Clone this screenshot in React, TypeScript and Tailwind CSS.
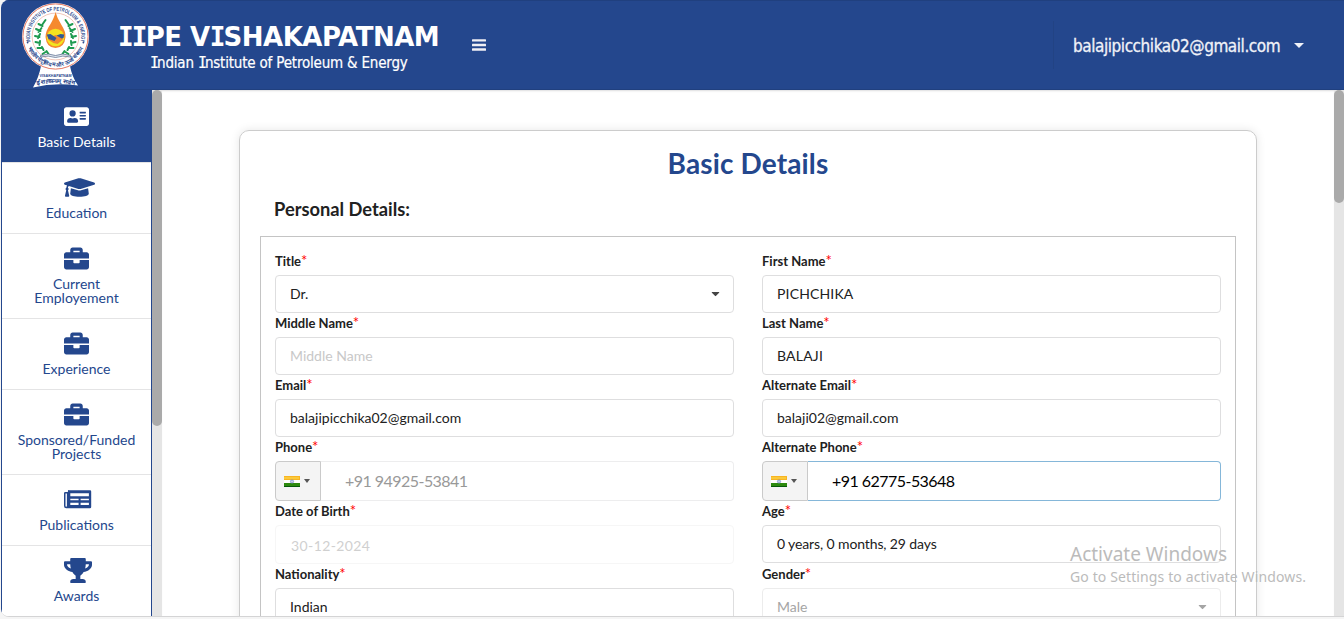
import type { ReactNode } from "react";
import { FaBriefcase, FaGraduationCap, FaTrophy, FaCaretDown } from "react-icons/fa";

function Logo() {
  return (
    <svg width="72" height="88" viewBox="0 0 72 88" className="block">
      <defs>
        <path id="arcTop" d="M11.700 41.700 A25.600 25.600 0 1 1 61.300 41.700" />
        <path id="arcBottom" d="M8 44.800 A30 30 0 0 0 65 44.800" />
        <path id="arcBase" d="M16.500 84.500 Q36.500 79.500 56.500 84.500" />
      </defs>
      <path d="M22 65 H51 Q53 76 59 84.500 Q36 81 14 86.500 Q20 76 22 65Z" fill="#fff" />
      <circle cx="36.500" cy="35.500" r="33.500" fill="#fff" />
      <circle cx="36.500" cy="35.500" r="32.600" fill="none" stroke="#e2694f" strokeWidth="0.900" />
      <circle cx="36.500" cy="35.500" r="23.400" fill="none" stroke="#e8a08c" strokeWidth="0.600" />
      <text fontFamily="Liberation Sans" fontWeight="bold" fontSize="5.600" fill="#2b4a8e">
        <textPath href="#arcTop" textLength="91" lengthAdjust="spacingAndGlyphs" startOffset="1">INDIAN INSTITUTE OF PETROLEUM &amp; ENERGY</textPath>
      </text>
      <text fontFamily="sans-serif" fontWeight="bold" fontSize="5.400" fill="#2b4a8e">
        <textPath href="#arcBottom" textLength="70" lengthAdjust="spacingAndGlyphs" startOffset="2">भारतीय पेट्रोलियम और ऊर्जा संस्थान</textPath>
      </text>
      <circle cx="8.600" cy="41.500" r="0.900" fill="#2b4a8e" />
      <circle cx="64.400" cy="41.500" r="0.900" fill="#2b4a8e" />
      <g transform="translate(0.500 -1)">
        <g stroke="#1f9a50" fill="none" strokeWidth="2" strokeLinecap="round">
          <path d="M26 20L22.500 25M23 26L19 24M22 28L19 32M21 31L16.500 29M20.500 34L18.500 38M20 37L15.500 36M20.500 41L20 45M20.500 43L16 42M22.500 47L24 50M22 48L18 48M27 51L29 54M26 52L23 54" />
          <path d="M46 20L49.500 25M49 26L53 24M50 28L53 32M51 31L55.500 29M51.500 34L53.500 38M52 37L56.500 36M51.500 41L52 45M51.500 43L56 42M49.500 47L48 50M50 48L54 48M45 51L43 54M46 52L49 54" />
        </g>
        <path d="M36 12 Q37.500 18 42 25 Q46.500 32 46 37 Q45 48 36 48 Q27 48 26 37 Q26 31 31 24 Q35 17 36 12Z" fill="#f58a2e" />
        <circle cx="36" cy="37.500" r="8.800" fill="#f3e51f" />
        <path d="M27.500 35 L32 37 L36 35 L40 36 L44.500 35 L43 40 L38 44 L34 43 L29 40Z" fill="#f0892f" />
        <path d="M27.300 34.500 L31 34 L37 38 L35 41 L29 39Z M44.700 34.500 L41 34 L37 35.500 L42 38.500 L44 38Z" fill="#315993" />
        <path d="M21 55.500 Q29 52.500 36 55.500 Q43 52.500 51 55.500 V57 Q43 55 36 57.500 Q29 55 21 57Z" fill="#dfe6ee" stroke="#51658a" strokeWidth="0.700" />
      </g>
      <text x="36.500" y="75.800" textAnchor="middle" textLength="32" lengthAdjust="spacingAndGlyphs" fontFamily="Liberation Sans" fontWeight="bold" fontSize="4.200" fill="#2b4a8e">VISAKHAPATNAM</text>
      <text fontFamily="sans-serif" fontWeight="bold" fontSize="5.600" fill="#2b4a8e">
        <textPath href="#arcBase" textLength="37" lengthAdjust="spacingAndGlyphs" startOffset="2">ईशावास्यम् सर्वम्</textPath>
      </text>
    </svg>
  );
}

function CardIcon() {
  return (
    <svg width="25" height="25" viewBox="0 0 512 512">
      <path
        fill="currentColor"
        fillRule="evenodd"
        d="M464 64H48C21 64 0 85 0 112v288c0 27 21 48 48 48h416c27 0 48-21 48-48V112c0-27-21-48-48-48zM176 128a64 64 0 1 1 0 128 64 64 0 0 1 0-128zm112 237c0 11-10 19-22 19H86c-12 0-22-8-22-19v-19c0-32 30-58 67-58h5c25 11 56 11 81 0h5c37 0 66 26 66 58zM448 312c0 4-4 8-8 8H328c-4 0-8-4-8-8v-16c0-4 4-8 8-8h112c4 0 8 4 8 8zm0-64c0 4-4 8-8 8H328c-4 0-8-4-8-8v-16c0-4 4-8 8-8h112c4 0 8 4 8 8zm0-64c0 4-4 8-8 8H328c-4 0-8-4-8-8v-16c0-4 4-8 8-8h112c4 0 8 4 8 8z"
      />
    </svg>
  );
}

function NewsIcon() {
  return (
    <svg width="28" height="25" viewBox="0 0 28 25" className="max-w-none">
      <path fill="currentColor" fillRule="evenodd" d="M5.500 3.200H26a1.200 1.200 0 0 1 1.200 1.200V20a1.200 1.200 0 0 1-1.200 1.200H2.200A2.200 2.200 0 0 1 0 19V6.300A1.300 1.300 0 0 1 1.300 5H3.900V4.400A1.200 1.200 0 0 1 5.500 3.200zM1.500 6.500V19a.7.7 0 0 0 1.400 0V6.500zM6.300 6.200V9.300H24.900V6.200zM6.300 11.700V13.200H14.600V11.700zM16.600 11.700V13.200H24.900V11.700zM6.300 15.700V18H14.600V15.700zM16.600 15.700V18H24.900V15.700z" />
    </svg>
  );
}

function NavItem({ icon, children, tall, active }: { icon: ReactNode; children: ReactNode; tall?: boolean; active?: boolean }) {
  return (
    <a
      className={`flex shrink-0 flex-col items-start border-b border-[#e4e4e5] ${
        active ? "h-[73px] bg-[#24478d] pt-[14px] text-white" : tall ? "h-[85px] bg-white pt-[12px] text-[#24478d]" : "h-[71px] bg-white pt-[12px] text-[#24478d]"
      }`}
    >
      <span className="ml-[62px] h-[25px] w-[25px]">{icon}</span>
      <span className="mt-[6px] w-full text-center text-[14px] leading-[14px]">{children}</span>
    </a>
  );
}

function Field({ label, children }: { label: string; children: ReactNode }) {
  return (
    <div className="min-w-0">
      <label className="block h-6 pt-px text-[13px] leading-[18px] font-bold text-[#212121]">
        {label}
        <span className="text-[15px] leading-none font-normal text-[#f00]">*</span>
      </label>
      {children}
    </div>
  );
}

function Box({ children, className = "text-[#212121]" }: { children: ReactNode; className?: string }) {
  return (
    <div className={`flex h-[38px] items-center rounded border border-[#dededf] bg-white px-[14px] pb-[2px] text-[14px] ${className}`}>
      {children}
    </div>
  );
}

function Phone({ value, focused }: { value: string; focused?: boolean }) {
  return (
    <div className="flex h-10 text-[16px] tracking-[-0.540px]">
      <div className="flex w-[46px] shrink-0 items-center gap-[4px] rounded-l border border-[#cacaca] bg-[#f4f4f4] pl-[8px]">
        <svg width="16" height="11" viewBox="0 0 16 11" shapeRendering="crispEdges">
          <rect width="16" height="4" fill="#f8b422" />
          <rect width="15" height="2" y="1" fill="#fbc93a" />
          <rect width="16" height="3" y="4" fill="#fff" />
          <rect width="16" height="4" y="7" fill="#2d8a0e" />
          <rect width="16" height="1" y="10" fill="#07590b" />
          <circle cx="8" cy="5.500" r="1.600" fill="#c6cee9" stroke="#718ac9" strokeWidth="0.700" shapeRendering="auto" />
        </svg>
        <svg width="6" height="4" viewBox="0 0 6 4">
          <path d="M0 0H6L3 4Z" fill="#555" />
        </svg>
      </div>
      <div
        className={`flex grow items-center rounded-r border border-l-0 bg-white pl-6 ${
          focused ? "border-[#85b7d9] text-black" : "border-[#ededee] text-[#999]"
        }`}
      >
        {value}
      </div>
    </div>
  );
}

function BoldI() {
  return <span className="font-['DejaVu_Sans_Mono',monospace] tracking-[-1.800px]">I</span>;
}

function LightI() {
  return <span className="font-['DejaVu_Sans_Mono',monospace] tracking-[-2px]">I</span>;
}

export default function App() {
  return (
    <div className="h-[619px] overflow-hidden bg-[#f5f5f5] pl-px font-['Lato',sans-serif]">
      <div className="flex h-[617px] flex-col overflow-hidden rounded-l-lg border-b border-[#d4d4d5] bg-white">
        <header className="flex h-[90px] shrink-0 items-start border-t border-b border-t-[#20407f] border-b-[#20407f] bg-[#24478d] font-['DejaVu_Sans_Condensed','DejaVu_Sans',sans-serif] text-white">
          <div className="ml-[18px] w-[72px]">
            <Logo />
          </div>
          <div className="ml-[27px] w-[322px] pt-[19px] whitespace-nowrap">
            <h1 className="font-['DejaVu_Sans',sans-serif] text-[26px] leading-[34px] font-bold tracking-[-0.500px]">
              <BoldI /><BoldI />PE V<BoldI />SHAKAPATNAM
            </h1>
            <p className="ml-[32px] text-[15px] leading-[18px] tracking-[-0.190px] [-webkit-text-stroke:0.200px_white]">
              <LightI />ndian <LightI />nstitute of Petroleum &amp; Energy
            </p>
          </div>
          <svg width="14" height="12" viewBox="0 0 14 12" className="mt-[38px] ml-[32px] text-[#f0f0f5]">
            <rect width="14" height="2.400" rx="0.500" y="0.200" fill="currentColor" />
            <rect width="14" height="2.400" rx="0.500" y="4.800" fill="currentColor" />
            <rect width="14" height="2.400" rx="0.500" y="9.300" fill="currentColor" />
          </svg>
          <div className="mt-[20px] ml-auto flex h-[48px] w-[291px] items-center border-l border-[#224384] pl-[19px] text-[17px] text-[#f0f2f8]">
            <span className="w-[219px] pt-[4px] tracking-[-0.440px] [-webkit-text-stroke:0.300px_#f0f2f8]">balajipicchika02@gmail.com</span>
            <svg width="10" height="5" viewBox="0 0 10 5" className="ml-[2px]">
              <path d="M0 0H10L5 5Z" fill="currentColor" />
            </svg>
          </div>
        </header>
        <div className="flex min-h-0 grow">
          <nav className="flex w-[151px] shrink-0 flex-col overflow-hidden border-x border-[#24478d] bg-white">
            <NavItem active icon={<CardIcon />}>Basic Details</NavItem>
            <NavItem icon={<FaGraduationCap className="h-[25px] w-[31px] max-w-none" />}>Education</NavItem>
            <NavItem tall icon={<FaBriefcase size={25} />}>Current<br />Employement</NavItem>
            <NavItem icon={<FaBriefcase size={25} />}>Experience</NavItem>
            <NavItem tall icon={<FaBriefcase size={25} />}>Sponsored/Funded<br />Projects</NavItem>
            <NavItem icon={<NewsIcon />}>Publications</NavItem>
            <NavItem icon={<FaTrophy className="h-[25px] w-[28px] max-w-none" />}>Awards</NavItem>
          </nav>
          <div className="w-[10px] shrink-0 bg-[#e5e5e5]">
            <div className="h-[336px] rounded-[5px] bg-[#aaa]" />
          </div>
          <main className="grow overflow-hidden pt-10 shadow-[inset_0_2px_2px_-1px_rgba(34,36,38,0.15)]">
            <section className="ml-[77px] h-[900px] w-[1018px] rounded-[10px] border border-[#ccc] px-[20px] shadow-[0_0_10px_rgba(0,0,0,0.1)]">
              <h2 className="pt-[12px] text-center text-[28px] leading-[40px] font-bold tracking-[0.130px] text-[#24478d]">Basic Details</h2>
              <h3 className="mt-[14px] ml-[14px] text-[18.300px] leading-[24px] font-bold text-[#212121]">Personal Details:</h3>
              <div className="mt-[15px] grid h-[760px] grid-cols-2 content-start gap-x-[28px] border border-[#c4c4c4] px-[14px] pt-[14px]">
                <Field label="Title">
                  <Box className="justify-between text-[#212121]">
                    Dr.
                    <FaCaretDown className="mr-[-3px] text-[13px] text-[#444]" />
                  </Box>
                </Field>
                <Field label="First Name"><Box className="tracking-[0.150px] text-[#212121]">PICHCHIKA</Box></Field>
                <Field label="Middle Name"><Box className="text-[#c8c8c8]">Middle Name</Box></Field>
                <Field label="Last Name"><Box className="tracking-[0.200px] text-[#212121]">BALAJI</Box></Field>
                <Field label="Email"><Box>balajipicchika02@gmail.com</Box></Field>
                <Field label="Alternate Email"><Box>balaji02@gmail.com</Box></Field>
                <Field label="Phone"><Phone value="+91 94925-53841" /></Field>
                <Field label="Alternate Phone"><Phone value="+91 62775-53648" focused /></Field>
                <Field label="Date of Birth">
                  <div className="flex h-[39px] items-center rounded border border-[#f6f6f6] pt-px pl-[15px] text-[14px] tracking-[0.400px] text-[#d0d0d0]">30-12-2024</div>
                </Field>
                <Field label="Age"><Box className="tracking-[-0.120px] text-[#212121]">0 years, 0 months, 29 days</Box></Field>
                <Field label="Nationality"><Box>Indian</Box></Field>
                <Field label="Gender">
                  <Box className="justify-between border-[#ececec] text-[#a5a5a5]">
                    Male
                    <FaCaretDown className="mr-[-3px] text-[13px]" />
                  </Box>
                </Field>
              </div>
            </section>
          </main>
          <div className="w-[10px] shrink-0 bg-[#e5e5e5]">
            <div className="h-[113px] rounded-[5px] bg-[#aaa]" />
          </div>
        </div>
      </div>
      <div className="pointer-events-none absolute top-[541px] left-[1070px] font-['Noto_Sans',sans-serif] whitespace-nowrap text-[#bbb]">
        <p className="text-[19px] leading-[26px]">Activate Windows</p>
        <p className="text-[14px] leading-[20px] tracking-[0.120px]">Go to Settings to activate Windows.</p>
      </div>
    </div>
  );
}
